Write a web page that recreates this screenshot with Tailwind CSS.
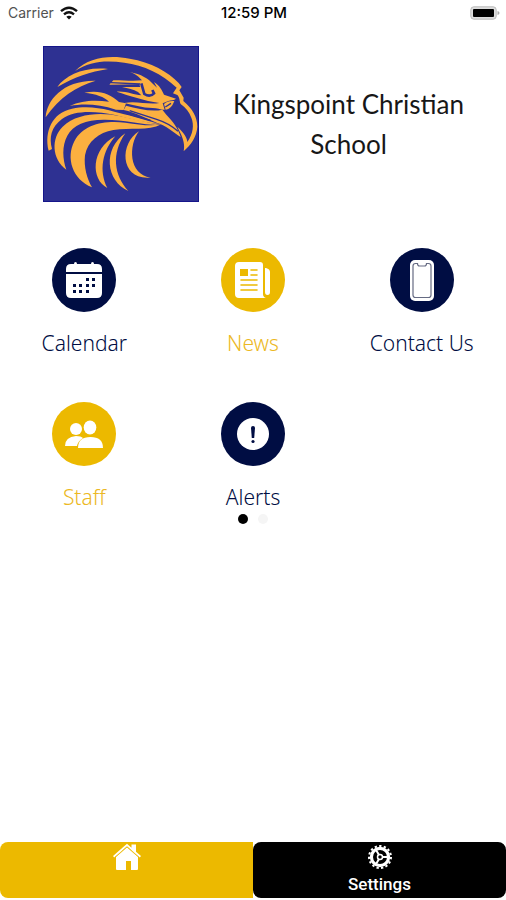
<!DOCTYPE html>
<html lang="en">
<head>
<meta charset="utf-8">
<meta name="viewport" content="width=device-width, initial-scale=1">
<title>Kingspoint Christian School</title>
<script src="https://cdn.jsdelivr.net/npm/@tailwindcss/browser@4"></script>
</head>
<body class="bg-white">
<div class="flex min-h-screen flex-col bg-white pb-0.5 font-['Noto_Sans',sans-serif]">
  <div class="grid h-[26px] grid-cols-3 items-center pr-1.5 pl-2 font-['Inter',sans-serif] text-sm text-neutral-800">
    <div class="flex items-center gap-1.5">
      <span class="text-neutral-600">Carrier</span>
      <svg class="h-[14px] w-[18px]" viewBox="0 0 18 14" fill="none" stroke="#111" stroke-width="2.4" aria-label="Wi-Fi">
        <path d="M1 5.2Q9-1.8 17 5.2M4 8.4Q9 4.2 14 8.4"/><path d="M6.3 10.8Q9 8.8 11.7 10.8L9 13.6Z" fill="#111" stroke="none"/>
      </svg>
    </div>
    <span class="text-center text-[15px] font-medium text-black">12:59 PM</span>
    <svg class="h-[14px] w-[30px] justify-self-end" viewBox="0 0 30 14" aria-label="Battery full">
      <rect x=".8" y=".8" width="25.4" height="12.4" rx="3" fill="#ddd" stroke="#bbb"/><rect x="3" y="3" width="21" height="8" rx="1" fill="#000"/><path d="M27.5 5v4q2-.6 2-2t-2-2" fill="#aaa"/>
    </svg>
  </div>

  <header class="mt-5 flex items-center pr-8 pl-[43px]">
    <svg class="size-[156px] shrink-0" viewBox="21 16 468 468" role="img" aria-label="Eagle logo">
      <rect x="21" y="16" width="468" height="468" fill="#2e3192"/>
      <rect x="22.5" y="17.5" width="465" height="465" fill="none" stroke="#15158a" stroke-width="3"/>
      <g fill="#fcb040">
        <path d="M117 91C160 50 218 43 281 54C345 64 397 94 428 127L437 139L430 149L443 171L442 181C470 204 484 231 484 258C482 289 465 312 443 332C447 314 442 298 436 283L424 258C444 277 454 292 454 304C471 279 475 253 466 231C460 215 450 202 434 190C430 182 432 171 424 163L411 158L422 141C377 99 324 73 265 66C211 58 160 61 117 91Z"/>
        <path d="M64 139C89 104 144 78 216 85C162 94 117 108 64 139Z"/>
        <path d="M29 230C32 178 82 118 179 120C119 138 71 169 29 230Z"/>
        <path d="M145 156C190 147 222 159 249 184L270 188L263 208L240 207C188 190 143 188 101 196C139 177 182 178 219 183C205 169 180 159 145 156Z"/>
        <path d="M220 132L232 119C266 119 292 122 318 119C308 108 299 99 281 94C315 100 339 115 351 130L363 141L354 124C372 135 378 150 384 162L420 174C414 179 405 178 397 181L380 188L386 207C375 208 364 202 350 202C320 202 288 192 265 187C300 180 338 193 370 187C325 180 280 165 242 153C272 151 293 163 316 164L306 154C293 146 276 143 258 139L313 139L309 131Z"/>
        <path d="M384 190Q395 179 415 181Q406 206 389 207Z"/>
        <path d="M270 195C306 203 346 215 379 207L391 222C410 242 426 262 434 289C412 274 391 255 362 246C331 234 299 215 263 208Z"/>
        <path d="M38 330C24 272 49 216 108 204C175 190 233 214 278 224L370 250C330 247 284 235 237 223C177 211 116 208 78 235C45 260 39 290 48 325Z"/>
        <path d="M91 387C47 354 45 293 80 258C121 218 194 214 250 226L372 253C315 252 258 236 203 237C149 237 111 253 94 285C77 316 80 355 91 387Z"/>
        <path d="M168 440C109 417 89 352 115 302C142 250 205 239 268 246C310 251 342 258 376 251C336 272 282 260 232 268C188 276 155 302 147 344C143 380 153 414 168 440Z"/>
        <path d="M214 442C164 417 164 325 238 287C199 331 188 391 214 442Z"/>
        <path d="M277 451C209 421 200 324 268 278C225 339 234 404 277 451Z"/>
        <path d="M309 272C277 313 277 402 344 411C253 420 248 310 309 272Z"/>
      </g>
      <path d="M316 128L325 160Q342 171 354 158L349 148" fill="none" stroke="#2e3192" stroke-width="8"/>
      <path d="M225 126L312 130M232 137L310 134M388 199L405 188M268 217L344 239M281 210L362 236Q400 248 426 272" fill="none" stroke="#2e3192" stroke-width="4"/>
    </svg>
    <h1 class="flex-1 pl-6 text-center font-['Lato',sans-serif] text-[26px] leading-10 text-neutral-900">Kingspoint Christian School</h1>
  </header>

  <main class="flex-1 pt-[46px]">
    <nav aria-label="Sections" class="grid grid-cols-3 gap-y-11 text-[21px] leading-[30px] font-light">
      <a href="#calendar" class="flex flex-col items-center gap-4 text-[#000d43]">
        <svg class="size-16" viewBox="0 0 64 64"><circle cx="32" cy="32" r="32" fill="#000d43"/>
          <path fill="#fff" d="M14 24v-3q0-5 5-5h3q0-2 1.500-2t1.500 2h14q0-2 1.500-2t1.500 2h3q5 0 5 5v3zM14 26h36v19q0 5-5 5H19q-5 0-5-5z"/>
          <path d="M34 30h3v3h-3zm6 0h3v3h-3zM21 36h3v3h-3zm6 0h3v3h-3zm7 0h3v3h-3zm6 0h3v3h-3zM21 42h3v3h-3zm6 0h3v3h-3zm7 0h3v3h-3z" fill="#000d43"/></svg>
        Calendar</a>
      <a href="#news" class="flex flex-col items-center gap-4 text-[#ecb824]">
        <svg class="size-16" viewBox="0 0 64 64"><circle cx="32" cy="32" r="32" fill="#ecb900"/>
          <path fill="#fff" d="M18 14h21q3 0 3 3v29q0 3 3 4H18q-4 0-4-4V18q0-4 4-4zM44 20h1q4 1 4 4v20q0 3-2.500 3T44 44z"/>
          <path d="M19 21h8v7h-8z" fill="#ecb900"/><path d="M30 22h6M30 27h6M20 32h16M20 37h16M20 42h16" stroke="#ecb900" stroke-width="1.600" stroke-linecap="round"/></svg>
        News</a>
      <a href="#contact" class="flex flex-col items-center gap-4 text-[#000d43]">
        <svg class="size-16" viewBox="0 0 64 64"><circle cx="32" cy="32" r="32" fill="#000d43"/>
          <rect x="20" y="12" width="24" height="41" rx="5" fill="#fff"/>
          <path d="M25.500 15.500h2q0 2.500 2 2.500h5q2 0 2-2.500h2q2.500 0 2.500 2.500v29q0 2.500-2.500 2.500h-13q-2.500 0-2.500-2.500V18q0-2.500 2.500-2.500z" fill="none" stroke="#666b83" stroke-width="1.200"/></svg>
        Contact Us</a>
      <a href="#staff" class="flex flex-col items-center gap-4 text-[#ecb824]">
        <svg class="size-16" viewBox="0 0 64 64"><circle cx="32" cy="32" r="32" fill="#ecb900"/>
          <g fill="#fff"><circle cx="24" cy="27" r="6"/><path d="M13 44q0-9 11-10q5 0 7 2q-5 3-6 8z"/><ellipse cx="38" cy="25.500" rx="6.300" ry="7"/><path d="M26 46q0-11 12.500-11T51 46z"/></g></svg>
        Staff</a>
      <a href="#alerts" class="flex flex-col items-center gap-4 text-[#000d43]">
        <svg class="size-16" viewBox="0 0 64 64"><circle cx="32" cy="32" r="32" fill="#000d43"/><circle cx="32" cy="32" r="16" fill="#fff"/>
          <path d="M30 26q0-2 2-2t2 2l-.8 10h-2.400z" fill="#000d43"/><circle cx="32" cy="39.500" r="1.600" fill="#000d43"/></svg>
        Alerts</a>
    </nav>
    <div class="mt-0.5 flex justify-center gap-2.5">
      <button type="button" aria-label="Page 1" class="size-2.5 rounded-full bg-black"></button>
      <button type="button" aria-label="Page 2" class="size-2.5 rounded-full bg-neutral-100"></button>
    </div>
  </main>

  <nav aria-label="Tabs" class="grid h-14 grid-cols-2 font-['Roboto',sans-serif] text-[17px] leading-5 font-medium text-white">
    <a href="#home" aria-label="Home" class="flex flex-col items-center rounded-l-lg bg-[#ecb900] pt-px">
      <svg class="h-7 w-7" viewBox="0 0 28 28" fill="#fff"><path d="M3 13.500L14 4l11 9.500V26q0 1-1 1h-6v-9h-5v9H4q-1 0-1-1z"/><path d="M0 13L14 .8l4.500 4V1.500H23v7.300l5 4.200-1.200 1.500L14 3.300 1.200 14.500z"/><path d="M1.500 15L14 4l12.500 11" fill="none" stroke="#ecb900" stroke-width=".8"/></svg>
    </a>
    <a href="#settings" class="flex flex-col items-center rounded-lg bg-black pt-0.5">
      <svg class="size-[26px]" viewBox="0 0 26 26" fill="none" stroke="#fff"><circle cx="13" cy="13" r="8.600" stroke-width="3.200"/><circle cx="13" cy="13" r="11" stroke-width="2" stroke-dasharray="2.300 2.308"/><circle cx="13" cy="13" r="2.500" stroke-width="1.500"/><path d="M15 13h7M12 11L8.500 5M12 15l-3.500 6" stroke-width="2"/></svg>
      <span class="mt-1">Settings</span>
    </a>
  </nav>
</div>
</body>
</html>
